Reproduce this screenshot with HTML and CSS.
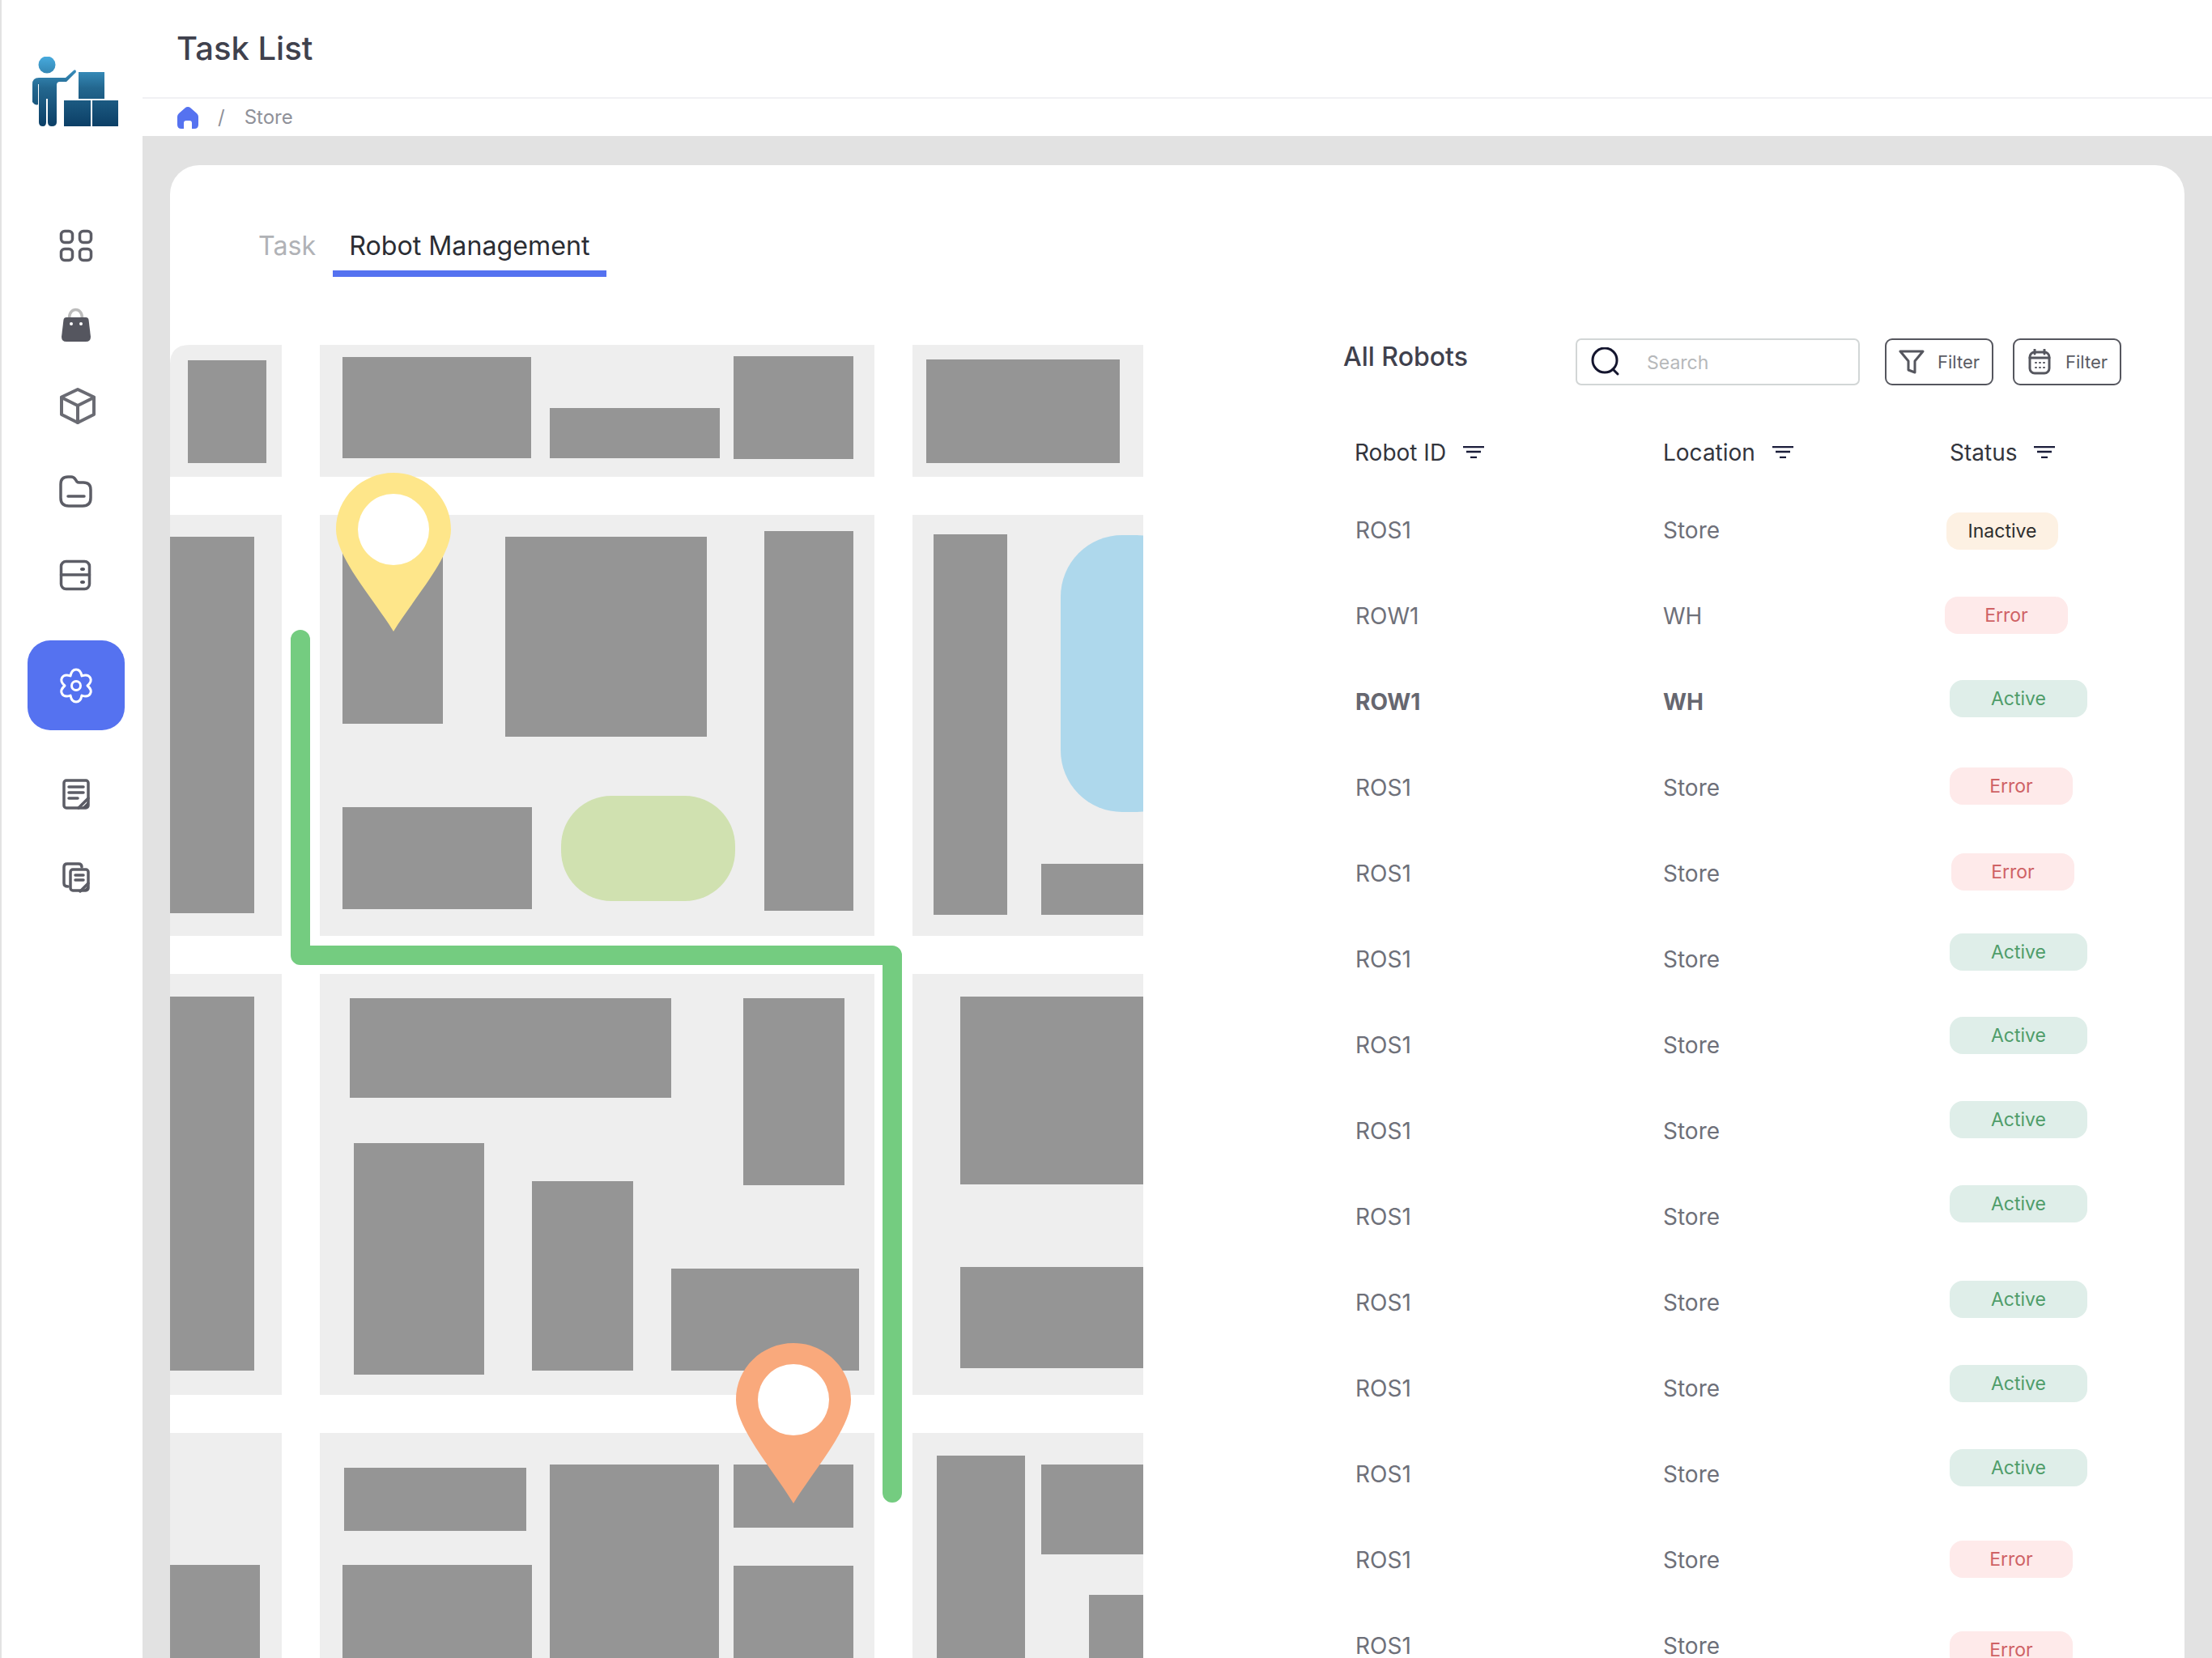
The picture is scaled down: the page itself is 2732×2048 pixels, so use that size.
FILE: index.html
```html
<!DOCTYPE html>
<html lang="en">
  <head>
    <meta charset="UTF-8" />
    <meta name="viewport" content="width=device-width, initial-scale=1.0" />
    <title>Task List</title>
    <link rel="stylesheet" href="styles.css">
  </head>
  <body>
    <div class="app">
      <aside class="sidebar">
        <svg class="logo" viewBox="40 70 106 86">
          <defs>
            <linearGradient id="logoFill" gradientUnits="userSpaceOnUse" x1="0" y1="70" x2="0" y2="156">
              <stop offset="0" stop-color="#47aadd" />
              <stop offset="0.45" stop-color="#23678f" />
              <stop offset="1" stop-color="#0c3f66" />
            </linearGradient>
          </defs>
          <g fill="url(#logoFill)">
            <circle cx="58" cy="80" r="10.5" />
            <path d="M40 104 Q40 96 48 96 H81 L91 87 Q93 85 94 88 Q94 90 92 91 L82 101 H74 Q70 101 70 105 V151 Q70 156 64 156 Q59 156 59 151 V122 H57 V151 Q57 156 53 156 Q48 156 48 151 V104 H47 V129 Q44 131 40 126 Z" />
            <rect x="97" y="89" width="32" height="33" />
            <rect x="79" y="124" width="33" height="32" />
            <rect x="114" y="124" width="32" height="32" />
          </g>
        </svg>
        <nav class="nav">
          <a class="nav__item">
            <svg class="nav__icon" viewBox="0 0 48 48">
              <rect x="5.5" y="6.5" width="14" height="14" rx="4.5" />
              <rect x="28.5" y="6.5" width="14" height="14" rx="4.5" />
              <rect x="5.5" y="28.5" width="14" height="14" rx="4.5" />
              <rect x="28.5" y="28.5" width="14" height="14" rx="4.5" />
            </svg>
          </a>
          <a class="nav__item">
            <svg class="nav__icon" viewBox="0 0 48 48">
              <path stroke="#bcbcbc" d="M15.5 15 C15.5 1 31.5 1 31.5 15" />
              <path class="solid" d="M12 14 H36 Q39 14 39.5 17 L42 38 Q42 44 36 44 H12 Q6 44 6 38 L8.5 17 Q9 14 12 14 Z" />
              <circle class="dot" cx="18" cy="22" r="2" />
              <circle class="dot" cx="30" cy="22" r="2" />
            </svg>
          </a>
          <a class="nav__item">
            <svg class="nav__icon nav__icon--heavy" viewBox="0 0 48 48">
              <path d="M26 3 L46 12.5 V34 L26 44 L6 34 V12.5 Z" />
              <path d="M6 13 L26 23 L46 13 M26 23 V44" />
            </svg>
          </a>
          <a class="nav__item">
            <svg class="nav__icon" viewBox="0 0 48 48">
              <path d="M5 16 Q5 7 14 7 H18 Q21 7 23 10 L25 13 Q26 14 28 14 H33 Q42 14 42 23 V33 Q42 43 32 43 H15 Q5 43 5 33 Z" />
              <path d="M14 31 H34" />
            </svg>
          </a>
          <a class="nav__item">
            <svg class="nav__icon" viewBox="0 0 48 48">
              <rect x="5.5" y="6.5" width="35" height="34" rx="6" />
              <path d="M5.5 23 H40.5" />
              <ellipse class="solid" cx="32" cy="16" rx="3" ry="2" />
              <ellipse class="solid" cx="32" cy="32" rx="3" ry="2" />
            </svg>
          </a>
          <a class="nav__item nav__item--active">
            <svg class="nav__icon nav__icon--light" viewBox="-24 -24 48 48">
              <path d="M-7 -12.1 C-5 -22.7 5 -22.7 7 -12.1 C17.16 -15.68 22.16 -7.02 14 0 C22.16 7.02 17.16 15.68 7 12.1 C5 22.7 -5 22.7 -7 12.1 C-17.16 15.68 -22.16 7.02 -14 0 C-22.16 -7.02 -17.16 -15.68 -7 -12.1 Z" />
              <circle cx="0" cy="0" r="5.5" />
            </svg>
          </a>
          <a class="nav__item">
            <svg class="nav__icon" viewBox="0 0 48 48">
              <rect x="9" y="8" width="30" height="34" rx="3" />
              <path d="M15 16 H33 M15 23 H33 M15 30 H26 M27 42 L39 30" />
              <path class="solid" d="M39 34 V42 H31 Z" />
            </svg>
          </a>
          <a class="nav__item">
            <svg class="nav__icon" viewBox="0 0 48 48">
              <path d="M14 37 Q9 37 9 33 V13 Q9 9 13 9 H27 Q31 9 31 13" />
              <rect x="17" y="16" width="22" height="26" rx="3" />
              <path d="M23 23 H33 M23 29 H33 M29 43 L39 33" />
              <path class="solid" d="M39 36 V42 H33 Z" />
            </svg>
          </a>
        </nav>
      </aside>

      <main class="main">
        <header class="topbar">
          <h1 class="topbar__title">Task List</h1>
          <div class="crumbs">
            <svg class="crumbs__home" viewBox="0 0 26 27">
              <path d="M13 0 Q15 0 16 1 L24 8 Q26 10 26 12 V22 Q26 27 21 27 H18 V20 Q18 17 15 17 H11 Q8 17 8 20 V27 H5 Q0 27 0 22 V12 Q0 10 2 8 L10 1 Q11 0 13 0 Z" />
            </svg>
            <span>/</span>
            <span>Store</span>
          </div>
        </header>

        <div class="content">
          <section class="card">
            <div class="tabs">
              <a class="tab">Task</a>
              <a class="tab tab--active">Robot Management</a>
            </div>

            <div class="card__body">
              <svg class="map" viewBox="210 425 1202 1622">
                <g fill="#eeeeee">
                  <path d="M210 588 V449 Q210 425 234 425 H348 V588 Z" />
                  <rect x="395" y="425" width="685" height="163" />
                  <rect x="1127" y="425" width="285" height="163" />
                  <rect x="210" y="635" width="138" height="520" />
                  <rect x="395" y="635" width="685" height="520" />
                  <rect x="1127" y="635" width="285" height="520" />
                  <rect x="210" y="1202" width="138" height="520" />
                  <rect x="395" y="1202" width="685" height="520" />
                  <rect x="1127" y="1202" width="285" height="520" />
                  <rect x="210" y="1769" width="138" height="279" />
                  <rect x="395" y="1769" width="685" height="279" />
                  <rect x="1127" y="1769" width="285" height="279" />
                </g>
                <g fill="#959595">
                  <rect x="232" y="444" width="97" height="127" />
                  <rect x="423" y="440" width="233" height="125" />
                  <rect x="679" y="503" width="210" height="62" />
                  <rect x="906" y="439" width="148" height="127" />
                  <rect x="1144" y="443" width="239" height="128" />
                  <rect x="210" y="662" width="104" height="465" />
                  <rect x="423" y="662" width="124" height="231" />
                  <rect x="624" y="662" width="249" height="247" />
                  <rect x="423" y="996" width="234" height="126" />
                  <rect x="944" y="655" width="110" height="469" />
                  <rect x="1153" y="659" width="91" height="470" />
                  <rect x="1286" y="1066" width="126" height="63" />
                  <rect x="210" y="1230" width="104" height="462" />
                  <rect x="432" y="1232" width="397" height="123" />
                  <rect x="918" y="1232" width="125" height="231" />
                  <rect x="437" y="1411" width="161" height="286" />
                  <rect x="657" y="1458" width="125" height="234" />
                  <rect x="829" y="1566" width="232" height="126" />
                  <rect x="1186" y="1230" width="226" height="232" />
                  <rect x="1186" y="1564" width="226" height="125" />
                  <rect x="210" y="1932" width="111" height="116" />
                  <rect x="425" y="1812" width="225" height="78" />
                  <rect x="679" y="1808" width="209" height="240" />
                  <rect x="906" y="1808" width="148" height="78" />
                  <rect x="906" y="1933" width="148" height="115" />
                  <rect x="423" y="1932" width="234" height="116" />
                  <rect x="1157" y="1797" width="109" height="251" />
                  <rect x="1286" y="1808" width="126" height="111" />
                  <rect x="1345" y="1969" width="67" height="78" />
                </g>
                <rect x="693" y="982" width="215" height="130" rx="62" fill="#d0e1b0" />
                <rect x="1310" y="660" width="170" height="342" rx="76" fill="#aed8ec" />
                <path d="M371 789 V1179 H1102 V1843" fill="none" stroke="#74cc80" stroke-width="24" stroke-linecap="round" stroke-linejoin="round" />
                <g transform="translate(486 653)">
                  <path fill="#fee68a" d="M0 126 C-25 85 -71 35 -71 0 C-71 -39 -39 -70 0 -70 C39 -70 71 -39 71 0 C71 35 25 85 0 126 Z" />
                  <circle r="44" fill="#ffffff" />
                </g>
                <g transform="translate(980 1728)">
                  <path fill="#f9a97c" d="M0 128 C-25 87 -71 35 -71 0 C-71 -39 -39 -70 0 -70 C39 -70 71 -39 71 0 C71 35 25 87 0 128 Z" />
                  <circle r="44" fill="#ffffff" />
                </g>
              </svg>

              <div class="panel">
                <div class="toolbar">
                  <h2 class="toolbar__title">All Robots</h2>
                  <label class="search">
                    <svg class="search__icon" viewBox="0 0 36 36">
                      <circle cx="17" cy="16" r="15" />
                      <path d="M27 27 L33 33" />
                    </svg>
                    <span class="search__text">Search</span>
                  </label>
                  <button class="btn">
                    <svg class="btn__icon" viewBox="0 0 32 32">
                      <path d="M2 3 H30 L20 15 V29 L12 26 V15 Z" />
                    </svg>
                    Filter
                  </button>
                  <button class="btn">
                    <svg class="btn__icon" viewBox="0 0 32 32">
                      <rect x="4" y="4" width="24" height="26" rx="6" />
                      <path d="M4 11 H28 M10 1 V6 M22 1 V6" />
                      <path class="btn__dots" d="M11 17 H12 M16 17 H17 M21 17 H22 M11 23 H12 M16 23 H17 M21 23 H22" />
                    </svg>
                    Filter
                  </button>
                </div>

                <div class="table">
                  <div class="col col--id">
                    <div class="col__head">Robot ID
                      <svg class="sort" viewBox="0 0 26 15"><path d="M0 1 H26 M4 7 H22 M9 14 H17" /></svg>
                    </div>
                    <div class="cell">ROS1</div>
                    <div class="cell">ROW1</div>
                    <div class="cell cell--bold">ROW1</div>
                    <div class="cell">ROS1</div>
                    <div class="cell">ROS1</div>
                    <div class="cell">ROS1</div>
                    <div class="cell">ROS1</div>
                    <div class="cell">ROS1</div>
                    <div class="cell">ROS1</div>
                    <div class="cell">ROS1</div>
                    <div class="cell">ROS1</div>
                    <div class="cell">ROS1</div>
                    <div class="cell">ROS1</div>
                    <div class="cell">ROS1</div>
                  </div>
                  <div class="col col--location">
                    <div class="col__head">Location
                      <svg class="sort" viewBox="0 0 26 15"><path d="M0 1 H26 M4 7 H22 M9 14 H17" /></svg>
                    </div>
                    <div class="cell">Store</div>
                    <div class="cell">WH</div>
                    <div class="cell cell--bold">WH</div>
                    <div class="cell">Store</div>
                    <div class="cell">Store</div>
                    <div class="cell">Store</div>
                    <div class="cell">Store</div>
                    <div class="cell">Store</div>
                    <div class="cell">Store</div>
                    <div class="cell">Store</div>
                    <div class="cell">Store</div>
                    <div class="cell">Store</div>
                    <div class="cell">Store</div>
                    <div class="cell">Store</div>
                  </div>
                  <div class="col col--status">
                    <div class="col__head">Status
                      <svg class="sort" viewBox="0 0 26 15"><path d="M0 1 H26 M4 7 H22 M9 14 H17" /></svg>
                    </div>
                    <span class="pill pill--inactive">Inactive</span>
                    <span class="pill pill--error">Error</span>
                    <span class="pill pill--active">Active</span>
                    <span class="pill pill--error">Error</span>
                    <span class="pill pill--error">Error</span>
                    <span class="pill pill--active">Active</span>
                    <span class="pill pill--active">Active</span>
                    <span class="pill pill--active">Active</span>
                    <span class="pill pill--active">Active</span>
                    <span class="pill pill--active">Active</span>
                    <span class="pill pill--active">Active</span>
                    <span class="pill pill--active">Active</span>
                    <span class="pill pill--error">Error</span>
                    <span class="pill pill--error">Error</span>
                  </div>
                </div>
              </div>
            </div>
          </section>
        </div>
      </main>
    </div>
  </body>
</html>
```

FILE: styles.css
```css
* {
  box-sizing: border-box;
}
body {
  margin: 0;
  font-family: "Inter", "Liberation Sans", sans-serif;
  color: #3f414d;
  background: #e2e2e2;
}
.app {
  display: flex;
  height: 2048px;
  overflow: hidden;
}

/* Sidebar */

.sidebar {
  flex: none;
  width: 176px;
  padding: 70px 0 0 32px;
  background: #ffffff;
  border-left: 2px solid #e2e2e2;
}
.logo {
  display: block;
  width: 106px;
  height: 86px;
  margin-left: 6px;
}
.nav {
  display: flex;
  flex-direction: column;
  gap: 51px;
  width: 120px;
  margin-top: 123px;
}
.nav__item {
  display: flex;
  justify-content: center;
  align-items: center;
}
.nav__item:nth-child(3) {
  margin-top: 1px;
}
.nav__item:nth-child(4),
.nav__item:nth-child(6) {
  margin-top: 5px;
}
.nav__item:nth-child(5) {
  margin-top: 6px;
}
.nav__item:nth-child(7),
.nav__item:nth-child(8) {
  margin-top: 3px;
}
.nav__item--active {
  height: 111px;
  border-radius: 28px;
  background: #5572f0;
}
.nav__icon {
  display: block;
  width: 48px;
  height: 48px;
  fill: none;
  stroke: #5c5d66;
  stroke-width: 3.5;
  stroke-linecap: round;
  stroke-linejoin: round;
}
.nav__icon--heavy {
  stroke: #6a6b73;
  stroke-width: 4;
}
.nav__icon--light {
  stroke: #ffffff;
  stroke-width: 3;
}
.nav__icon .solid {
  fill: #55565f;
  stroke: none;
}
.nav__icon .dot {
  fill: #ffffff;
  stroke: none;
}

/* Header */

.main {
  flex: 1;
  min-width: 0;
  display: flex;
  flex-direction: column;
}
.topbar {
  background: #ffffff;
}
.topbar__title {
  height: 122px;
  margin: 0;
  padding: 36px 0 0 42px;
  font-size: 40px;
  line-height: 48px;
  font-weight: 500;
  color: #3f414d;
  border-bottom: 2px solid #f1f1f4;
}
.crumbs {
  display: flex;
  align-items: center;
  gap: 24px;
  height: 44px;
  margin-bottom: 2px;
  padding-left: 43px;
  font-size: 24px;
  color: #8f9199;
}
.crumbs__home {
  width: 26px;
  height: 27px;
  margin-top: 2px;
  fill: #5572f0;
}

/* Card */

.content {
  flex: 1;
  padding: 36px 34px 0;
}
.card {
  height: 1900px;
  padding-top: 80px;
  background: #ffffff;
  border-radius: 36px 36px 0 0;
}
.tabs {
  display: flex;
  gap: 3px;
  padding-left: 89px;
  margin-bottom: 84px;
}
.tab {
  padding: 0 20px 10px;
  font-size: 32.2px;
  line-height: 40px;
  color: #b0b2b6;
  border-bottom: 8px solid transparent;
}
.tab--active {
  margin-left: -2px;
  color: #2b2d33;
  border-bottom-color: #5572f0;
}
.card__body {
  display: flex;
}
.map {
  flex: none;
  display: block;
  width: 1202px;
  height: 1622px;
}

/* Right panel */

.panel {
  flex: 1;
  margin-top: -8px;
  padding-left: 247px;
}
.toolbar {
  display: flex;
  align-items: flex-start;
  height: 58px;
}
.toolbar__title {
  flex: none;
  width: 287px;
  margin: 0;
  padding-top: 1px;
  font-size: 32px;
  line-height: 44px;
  font-weight: 500;
  color: #3f414d;
}
.search {
  display: flex;
  align-items: center;
  flex: none;
  width: 351px;
  height: 58px;
  padding-left: 17px;
  margin-right: 31px;
  border: 2px solid #d2d6d6;
  border-radius: 7px;
}
.search__icon {
  width: 36px;
  height: 36px;
  fill: none;
  stroke: #14152e;
  stroke-width: 3;
  stroke-linecap: round;
}
.search__text {
  margin: 2px 0 0 33px;
  font-size: 23px;
  color: #b6b8ba;
}
.btn {
  display: flex;
  align-items: center;
  flex: none;
  gap: 16px;
  width: 134px;
  height: 58px;
  padding: 0 0 0 15px;
  margin-right: 24px;
  font-family: inherit;
  font-size: 22px;
  color: #5b5c64;
  background: #ffffff;
  border: 2.5px solid #55565e;
  border-radius: 9px;
}
.btn__icon {
  flex: none;
  width: 32px;
  height: 32px;
  fill: none;
  stroke: #55565e;
  stroke-width: 3;
  stroke-linejoin: round;
  stroke-linecap: round;
}
.btn__icon .btn__dots {
  stroke-width: 2;
}

/* Table */

.table {
  display: flex;
  margin: 39px 0 0 14px;
}
.col {
  flex: none;
  display: flex;
  flex-direction: column;
  align-items: flex-start;
}
.col--id {
  width: 381px;
}
.col--location {
  width: 354px;
}
.col__head {
  display: flex;
  align-items: center;
  gap: 21px;
  height: 87px;
  font-size: 28px;
  color: #33353d;
}
.sort {
  width: 26px;
  height: 15px;
  fill: none;
  stroke: #1a1d3a;
  stroke-width: 2.5;
}
.cell {
  height: 106px;
  line-height: 106px;
  font-size: 28px;
  color: #6e7079;
}
.col--id .cell {
  padding-left: 1px;
}
.cell--bold {
  font-weight: 700;
  color: #666770;
}

/* Status pills, they don't line up with the rows in the design */

.pill {
  flex: none;
  height: 46px;
  margin-top: 58px;
  font-size: 23px;
  line-height: 46px;
  text-align: center;
  border-radius: 16px;
}
.pill--active {
  width: 170px;
  color: #4f9d6a;
  background: #dfeee9;
}
.pill--error {
  width: 152px;
  color: #cf6265;
  background: #feeaea;
}
.pill--inactive {
  width: 138px;
  color: #2d2d2d;
  background: #fdf1e3;
}
.pill:nth-child(2) {
  margin-top: 31px;
  margin-left: -4px;
}
.pill:nth-child(3) {
  margin-left: -6px;
}
.pill:nth-child(4) {
  margin-top: 57px;
}
.pill:nth-child(5) {
  margin-top: 62px;
}
.pill:nth-child(6) {
  margin-top: 60px;
  margin-left: 2px;
}
.pill:nth-child(7) {
  margin-top: 53px;
}
.pill:nth-child(8) {
  margin-top: 57px;
}
.pill:nth-child(11) {
  margin-top: 72px;
}
.pill:nth-child(14) {
  margin-top: 67px;
}
.pill:nth-child(15) {
  margin-top: 66px;
}
```
